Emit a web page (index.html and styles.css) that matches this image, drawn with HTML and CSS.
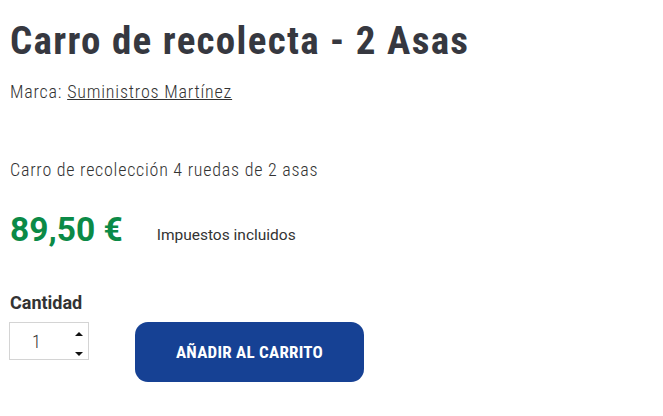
FILE: index.html
```html
<!DOCTYPE html>
<html lang="es">
<head>
<meta charset="utf-8">
<title>Carro de recolecta - 2 Asas</title>
<link rel="stylesheet" href="styles.css">
</head>
<body>
<main class="product">
  <h1 class="product-title">Carro de recolecta - 2 Asas</h1>
  <p class="brand">Marca: <a href="#" class="brand-link">Suministros Martínez</a></p>
  <p class="summary">Carro de recolección 4 ruedas de 2 asas</p>
  <div class="price-row">
    <span class="price">89,50&nbsp;€</span>
    <span class="tax">Impuestos incluidos</span>
  </div>
  <div class="qty-label">Cantidad</div>
  <div class="buy-row">
    <div class="qty">
      <span class="qty-value">1</span>
      <span class="qty-arrows">
        <span class="arrow arrow-up"></span>
        <span class="arrow arrow-down"></span>
      </span>
    </div>
    <button class="add-btn" type="button">Añadir al carrito</button>
  </div>
</main>
</body>
</html>
```
FILE: styles.css
```css
html, body {
  margin: 0;
  padding: 0;
  background: #ffffff;
}
body {
  font-family: Roboto, "Liberation Sans", sans-serif;
  color: #333333;
}
.product {
  padding: 18px 10px 0 10px;
}
.product-title {
  margin: 0;
  font-family: Roboto, sans-serif;
  font-stretch: condensed;
  font-weight: 700;
  font-size: 39px;
  letter-spacing: 1.3px;
  line-height: 46px;
  color: #363840;
}
.brand {
  margin: 17px 0 0 0;
  font-size: 18px;
  font-weight: 300;
  font-stretch: condensed;
  letter-spacing: 0.8px;
  line-height: 22px;
  color: #333;
}
.brand-link {
  color: #333;
  text-decoration: underline;
}
.summary {
  margin: 55px 0 0 0;
  font-size: 18px;
  font-weight: 300;
  font-stretch: condensed;
  letter-spacing: 0.75px;
  line-height: 24px;
  color: #333;
}
.price-row {
  display: flex;
  align-items: baseline;
  gap: 34px;
  margin-top: 28px;
}
.price {
  font-size: 33.5px;
  font-weight: 700;
  color: #0b8a47;
  line-height: 40px;
}
.tax {
  font-size: 15.5px;
  color: #333;
  position: relative;
  top: -1px;
}
.qty-label {
  margin-top: 42px;
  font-size: 18px;
  font-weight: 700;
  line-height: 22px;
  color: #333;
}
.buy-row {
  display: flex;
  align-items: flex-start;
  gap: 46px;
  margin-top: 8px;
}
.qty {
  box-sizing: border-box;
  width: 80px;
  height: 38px;
  margin-left: -1px;
  border: 1px solid #d4d4d4;
  display: flex;
  align-items: center;
  justify-content: space-between;
  padding: 0 5px 0 22px;
}
.qty-value {
  font-size: 18px;
  font-weight: 300;
  font-stretch: condensed;
  color: #333;
}
.qty-arrows {
  display: flex;
  flex-direction: column;
  justify-content: space-between;
  height: 24px;
  margin-top: 5px;
}
.arrow {
  width: 0;
  height: 0;
  border-left: 4px solid transparent;
  border-right: 4px solid transparent;
}
.arrow-up {
  border-bottom: 4px solid #111;
}
.arrow-down {
  border-top: 4px solid #111;
}
.add-btn {
  box-sizing: border-box;
  width: 229px;
  height: 60px;
  border: none;
  border-radius: 13px;
  background: #164194;
  color: #ffffff;
  font-family: Roboto, sans-serif;
  font-stretch: condensed;
  font-weight: 700;
  font-size: 17px;
  letter-spacing: 0.25px;
  text-transform: uppercase;
  cursor: pointer;
  padding: 0;
}
```
